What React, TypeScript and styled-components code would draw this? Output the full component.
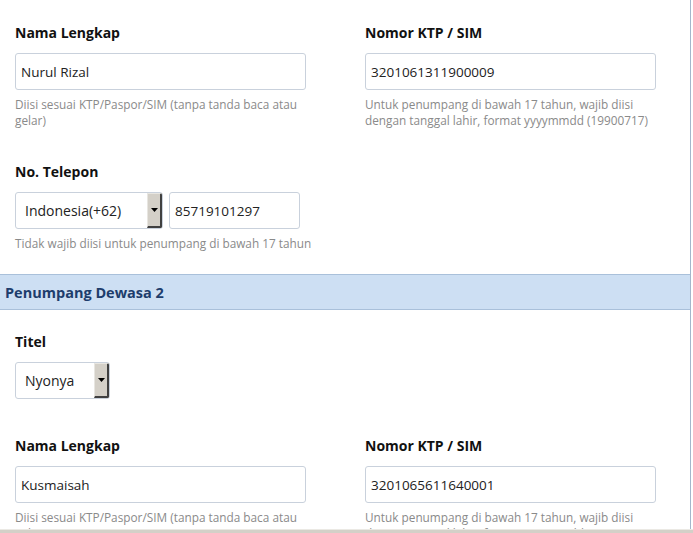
import styled, { createGlobalStyle } from 'styled-components';

const GlobalStyle = createGlobalStyle`
  html, body {
    margin: 0;
    padding: 0;
    background: #ffffff;
    overflow: hidden;
  }

  body {
    font-family: 'Open Sans', 'DejaVu Sans', sans-serif;
    color: #111;
  }
`;

type Passenger = {
  name: string;
  ktp: string;
};

const NAME_HELP = 'Diisi sesuai KTP/Paspor/SIM (tanpa tanda baca atau gelar)';
const KTP_HELP = 'Untuk penumpang di bawah 17 tahun, wajib diisi dengan tanggal lahir, format yyyymmdd (19900717)';

const SelectBox = ({ value, width }: { value: string; width: number }) => (
  <Select $width={width}>
    <span>{value}</span>
    <ArrowButton>
      <svg width='7' height='4' viewBox='0 0 7 4'>
        <path d='M0 0h7L3.5 4z' fill='#000' />
      </svg>
    </ArrowButton>
  </Select>
);

const NameRow = ({ passenger }: { passenger: Passenger }) => (
  <TwoCols>
    <Field>
      <Label>Nama Lengkap</Label>
      <TextInput readOnly value={passenger.name} $width={291} />
      <Help $width={291}>{NAME_HELP}</Help>
    </Field>
    <Field>
      <Label>Nomor KTP / SIM</Label>
      <TextInput readOnly value={passenger.ktp} $width={291} />
      <Help $width={291}>{KTP_HELP}</Help>
    </Field>
  </TwoCols>
);

const App = () => {
  return (
    <>
      <GlobalStyle />
      <Window>
        <Page>
          <Block $top={23} $bottom={34}>
            <NameRow passenger={{ name: 'Nurul Rizal', ktp: '3201061311900009' }} />
          </Block>

          <Block $top={0} $bottom={23}>
            <Field>
              <Label>No. Telepon</Label>
              <PhoneRow>
                <SelectBox value='Indonesia(+62)' width={148} />
                <TextInput readOnly value='85719101297' $width={131} />
              </PhoneRow>
              <Help $width={340}>Tidak wajib diisi untuk penumpang di bawah 17 tahun</Help>
            </Field>
          </Block>

          <SectionHeader>Penumpang Dewasa 2</SectionHeader>

          <Block $top={22} $bottom={37}>
            <Field>
              <Label>Titel</Label>
              <SelectBox value='Nyonya' width={95} />
            </Field>
          </Block>

          <Block $top={0} $bottom={0}>
            <NameRow passenger={{ name: 'Kusmaisah', ktp: '3201065611640001' }} />
          </Block>
        </Page>
        <StatusBar />
      </Window>
    </>
  );
};

export default App;

const Window = styled.div`
  display: flex;
  flex-direction: column;
  width: 693px;
  height: 533px;
  overflow: hidden;
`;

const Page = styled.div`
  flex: 1;
  min-height: 0;
  overflow: hidden;
  width: 690px;
  border-right: 1px solid #a4b6cb;
`;

const Block = styled.div<{ $top: number; $bottom: number }>`
  padding: ${(p) => p.$top}px 15px ${(p) => p.$bottom}px 15px;
`;

const TwoCols = styled.div`
  display: grid;
  grid-template-columns: 350px 291px;
`;

const Field = styled.div`
  display: flex;
  flex-direction: column;
  align-items: flex-start;
`;

const Label = styled.div`
  font-size: 14px;
  font-weight: 700;
  line-height: 20px;
  margin-bottom: 10px;
  color: #111;
`;

const TextInput = styled.input<{ $width: number }>`
  box-sizing: border-box;
  width: ${(p) => p.$width}px;
  height: 37px;
  padding: 0 5px;
  border: 1px solid #c9d1dc;
  border-radius: 3px;
  font-family: 'Open Sans', 'DejaVu Sans', sans-serif;
  font-size: 13.5px;
  color: #222;
  background: #fff;
  outline: none;
`;

const Help = styled.div<{ $width: number }>`
  width: ${(p) => p.$width}px;
  margin-top: 6px;
  font-size: 11.8px;
  line-height: 16px;
  color: #8a8a8a;
`;

const PhoneRow = styled.div`
  display: flex;
  gap: 6px;
`;

const Select = styled.div<{ $width: number }>`
  box-sizing: border-box;
  display: flex;
  align-items: stretch;
  width: ${(p) => p.$width}px;
  height: 37px;
  border: 1px solid #c9d1dc;
  border-radius: 3px;
  background: #fff;
  overflow: hidden;

  span {
    flex: 1;
    display: flex;
    align-items: center;
    padding-left: 9px;
    font-size: 14px;
    color: #222;
    white-space: nowrap;
  }
`;

const ArrowButton = styled.div`
  box-sizing: border-box;
  width: 15px;
  display: flex;
  align-items: center;
  justify-content: center;
  background: #d4d0c8;
  border-top: 1px solid #e8e6e1;
  border-left: 1px solid #e8e6e1;
  border-right: 2px solid #404040;
  border-bottom: 2px solid #404040;
`;

const SectionHeader = styled.div`
  box-sizing: border-box;
  height: 36px;
  display: flex;
  align-items: center;
  padding-left: 5px;
  background: #cddff3;
  border-top: 1px solid #a9c0da;
  border-bottom: 1px solid #a9c0da;
  font-size: 14.5px;
  font-weight: 700;
  color: #1d3d6c;
`;

const StatusBar = styled.div`
  height: 3px;
  flex-shrink: 0;
  background: #d4d0c8;
  border-top: 1px solid #ebe9e4;
`;
